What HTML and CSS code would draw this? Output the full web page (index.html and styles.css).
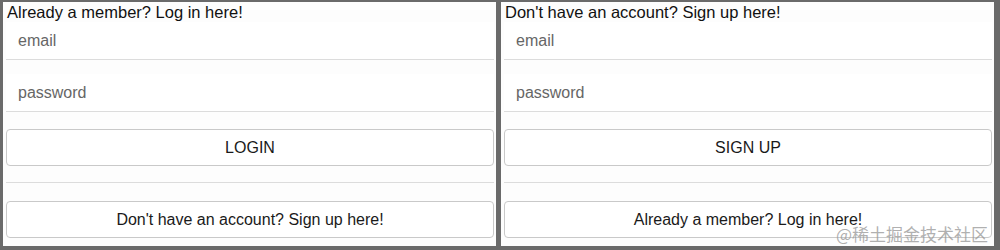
FILE: index.html
```html
<!DOCTYPE html>
<html lang="en">
<head>
    <meta charset="UTF-8">
    <meta name="viewport" content="width=device-width, initial-scale=1.0">
    <title>Login / Sign up</title>
    <link rel="stylesheet" href="styles.css">
</head>
<body>
    <div class="frame">
        <div class="panel">    <!-- login side -->
            <div class="title">Already a member? Log in here!</div>
            <form>
                <input type="text" class="field" placeholder="email">
                <input type="password" class="field" placeholder="password">
                <button type="button" class="btn">LOGIN</button>
            </form>
            <hr class="sep">
            <button type="button" class="btn">Don't have an account? Sign up here!</button>
        </div>
        <div class="panel">    <!-- signup side -->
            <div class="title">Don't have an account? Sign up here!</div>
            <form>
                <input type="text" class="field" placeholder="email">
                <input type="password" class="field" placeholder="password">
                <button type="button" class="btn">SIGN UP</button>
            </form>
            <hr class="sep">
            <button type="button" class="btn">Already a member? Log in here!</button>
        </div>
    </div>
    <span class="watermark">@稀土掘金技术社区</span>
</body>
</html>
```

FILE: styles.css
```css
*{
    margin: 0;
    padding: 0;
    box-sizing: border-box;
    font-family: "Liberation Sans", Arial, sans-serif;
}
body{
    width: 1000px;
    height: 250px;
    background-color: #6a6a6a;
    position: relative;
    overflow: hidden;
}
.frame{
    display: flex;
    gap: 5px;
    height: 250px;
    padding: 2px 6px 4px 3px;
}
.panel{
    flex: 1;
    background-color: #fdfdfd;
    padding: 0 2px 0 3px;
}
.title{
    font-size: 16.5px;
    line-height: 20px;
    color: #111;
    margin-left: 1px;
}
form{
    display: flex;
    flex-direction: column;
}
.field{
    height: 38px;
    width: 100%;
    border: none;
    border-bottom: 1px solid #dcdcdc;
    background-color: #fff;
    padding-left: 12px;
    font-size: 16px;
    outline: none;
    margin-bottom: 14px;
}
.field::placeholder{
    color: #666;
}
.btn{
    height: 37px;
    width: 100%;
    background-color: #fff;
    border: 1px solid #c9c9c9;
    border-radius: 4px;
    font-size: 16px;
    color: #1a1a1a;
    margin-top: 3px;
}
.sep{
    border: none;
    border-top: 1px solid #dcdcdc;
    margin: 16px 0 15px 0;
}
.watermark{
    position: absolute;
    right: 12px;
    bottom: 4px;
    font-family: "Noto Sans CJK SC", sans-serif;
    font-size: 17px;
    color: rgba(150, 150, 150, 0.75);
}
```
